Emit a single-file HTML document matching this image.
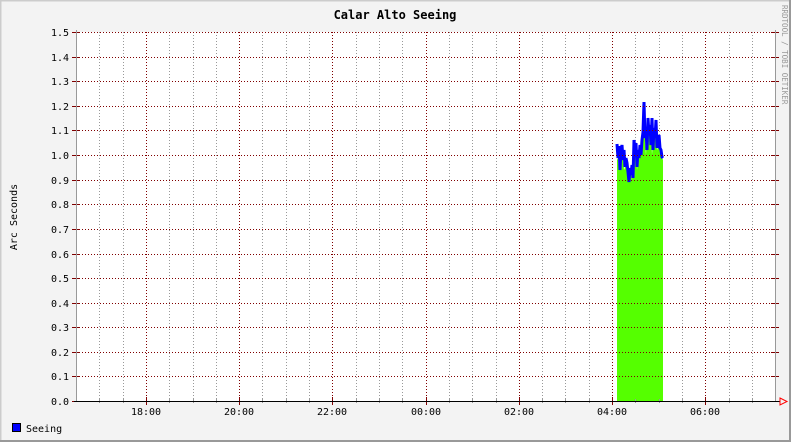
<!DOCTYPE html>
<html><head><meta charset="utf-8"><style>
html,body{margin:0;padding:0;background:#f3f3f3}
svg{display:block}
text{font-family:"DejaVu Sans Mono","Liberation Mono",monospace;font-size:10px;fill:#000}
</style></head><body>
<svg width="791" height="442" xmlns="http://www.w3.org/2000/svg">
<rect x="0" y="0" width="791" height="442" fill="#f3f3f3"/>
<path d="M0 0H791M0 1H791M0 0V442M1 0V442" stroke="#cccccc" stroke-width="1"/>
<path d="M0 441.5H791M0 440.5H791M790.5 0V442M789.5 0V442" stroke="#999" stroke-width="1"/>
<rect x="76" y="32" width="699" height="369" fill="#fff"/>
<g stroke="#999" stroke-width="1" stroke-dasharray="1,2" shape-rendering="crispEdges">
<path d="M99.5 32V401M123.5 32V401M169.5 32V401M193.5 32V401M216.5 32V401M262.5 32V401M286.5 32V401M309.5 32V401M356.5 32V401M379.5 32V401M402.5 32V401M449.5 32V401M472.5 32V401M496.5 32V401M542.5 32V401M565.5 32V401M589.5 32V401M635.5 32V401M659.5 32V401M682.5 32V401M729.5 32V401M752.5 32V401"/>
</g>
<polygon fill="#55ff00" points="617,401 617,158 618,160 619,170 621,160 623,158 624,170 626,165 628,175 629,182 631,172 632,180 633,168 634,150 636,152 637,170 638,160 640,155 642,150 643,140 644,120 645,140 646,155 647,130 649,135 651,128 652,155 653,140 655,132 657,150 659,145 661,155 663,160 663,401"/>
<polyline fill="none" stroke="#0000ff" stroke-width="3" stroke-linejoin="miter" points="617,144 618,158 619,146 620,170 621,150 622,145 623,160 624,150 625,167 626,158 627,163 628,172 629,182 630,168 631,175 632,165 633,178 634,140 635,150 636,143 637,167 638,150 639,158 640,145 641,155 642,140 643,132 644,102 645,138 646,130 647,150 648,118 649,135 650,125 651,145 652,118 653,150 654,128 655,138 656,120 657,148 658,138 659,135 660,148 661,150 662,157 663,158"/>
<g stroke="#800000" stroke-width="1" stroke-dasharray="1,2" shape-rendering="crispEdges">
<path d="M146.5 32V401M239.5 32V401M332.5 32V401M426.5 32V401M519.5 32V401M612.5 32V401M705.5 32V401"/>
<path d="M76 376.5H775M76 352.5H775M76 327.5H775M76 303.5H775M76 278.5H775M76 254.5H775M76 229.5H775M76 204.5H775M76 180.5H775M76 155.5H775M76 130.5H775M76 106.5H775M76 81.5H775M76 57.5H775M76 32.5H775"/>
</g>
<g stroke="#800000" stroke-width="1" shape-rendering="crispEdges">
<path d="M72 401.5H80M72 376.5H80M72 352.5H80M72 327.5H80M72 303.5H80M72 278.5H80M72 254.5H80M72 229.5H80M72 204.5H80M72 180.5H80M72 155.5H80M72 130.5H80M72 106.5H80M72 81.5H80M72 57.5H80M72 32.5H80"/>
<path d="M771 376.5H779M771 352.5H779M771 327.5H779M771 303.5H779M771 278.5H779M771 254.5H779M771 229.5H779M771 204.5H779M771 180.5H779M771 155.5H779M771 130.5H779M771 106.5H779M771 81.5H779M771 57.5H779M771 32.5H779"/>
<path d="M146.5 397V405M239.5 397V405M332.5 397V405M426.5 397V405M519.5 397V405M612.5 397V405M705.5 397V405"/>
</g>
<g stroke="#999" stroke-width="1" shape-rendering="crispEdges">
<path d="M76.5 30V402M775.5 30V402"/>
<path d="M99.5 399V403M123.5 399V403M169.5 399V403M193.5 399V403M216.5 399V403M262.5 399V403M286.5 399V403M309.5 399V403M356.5 399V403M379.5 399V403M402.5 399V403M449.5 399V403M472.5 399V403M496.5 399V403M542.5 399V403M565.5 399V403M589.5 399V403M635.5 399V403M659.5 399V403M682.5 399V403M729.5 399V403M752.5 399V403"/>
</g>
<path d="M74 401.5H780" stroke="#000" stroke-width="1" shape-rendering="crispEdges"/>
<path d="M780 398L787 401.5L780 405Z" fill="none" stroke="#ff0000" stroke-width="1"/>
<text x="395" y="19" text-anchor="middle" font-weight="bold" style="font-size:12px">Calar Alto Seeing</text>
<g text-anchor="end">
<text x="69" y="36">1.5</text><text x="69" y="61">1.4</text><text x="69" y="85">1.3</text><text x="69" y="110">1.2</text><text x="69" y="134">1.1</text><text x="69" y="159">1.0</text><text x="69" y="184">0.9</text><text x="69" y="208">0.8</text><text x="69" y="233">0.7</text><text x="69" y="258">0.6</text><text x="69" y="282">0.5</text><text x="69" y="307">0.4</text><text x="69" y="331">0.3</text><text x="69" y="356">0.2</text><text x="69" y="380">0.1</text><text x="69" y="405">0.0</text>
</g>
<g text-anchor="middle">
<text x="146" y="415">18:00</text><text x="239" y="415">20:00</text><text x="332" y="415">22:00</text><text x="426" y="415">00:00</text><text x="519" y="415">02:00</text><text x="612" y="415">04:00</text><text x="705" y="415">06:00</text>
</g>
<text transform="translate(17,217) rotate(-90)" text-anchor="middle">Arc Seconds</text>
<text transform="translate(782,5) rotate(90)" style="font-size:7.5px;fill:#999">RRDTOOL / TOBI OETIKER</text>
<rect x="12.5" y="423.5" width="8" height="8" fill="#0000ff" stroke="#000"/>
<text x="26" y="432">Seeing</text>
</svg>
</body></html>
